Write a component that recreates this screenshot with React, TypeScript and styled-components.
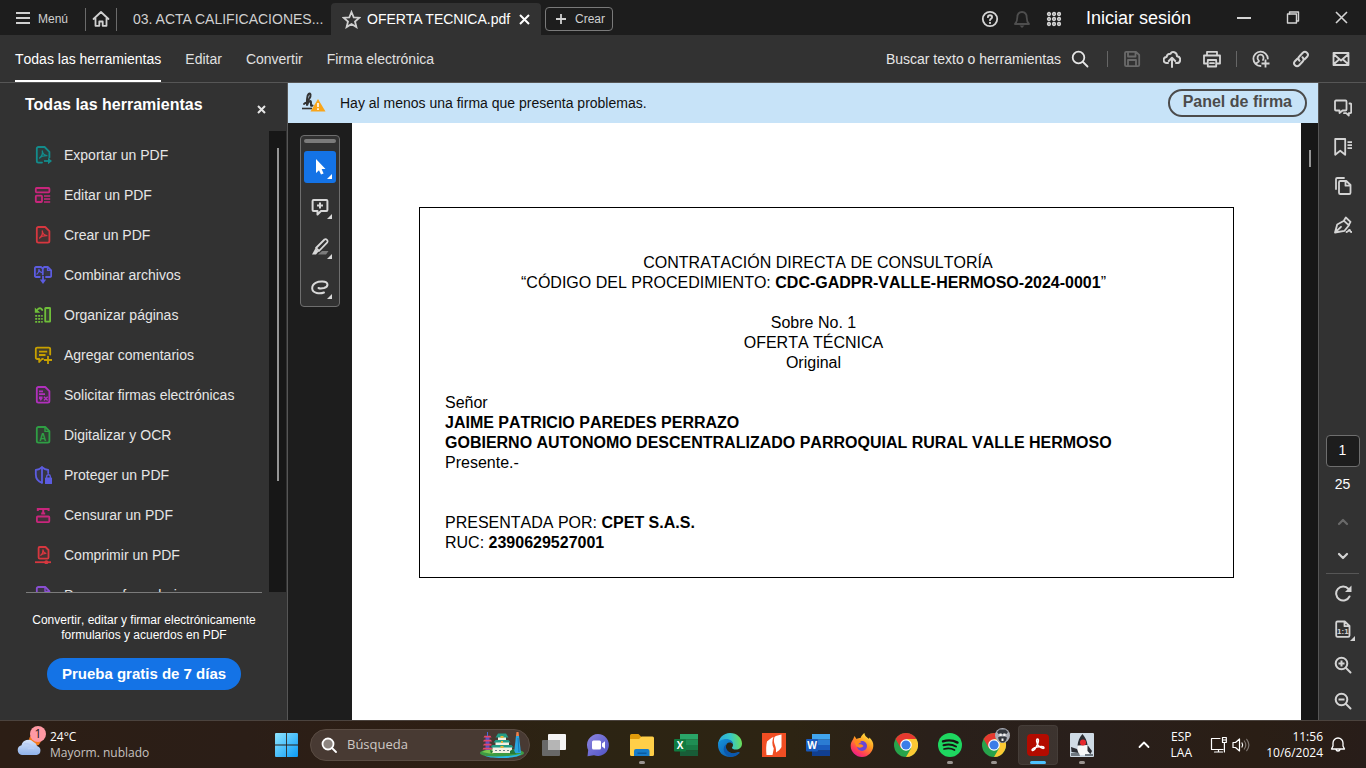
import React from 'react';
import styled, { createGlobalStyle, css } from 'styled-components';

const GlobalStyle = createGlobalStyle`
  *, *::before, *::after { box-sizing: border-box; }
  body { margin: 0; background: #1d1d1d; }
  button, input { font: inherit; color: inherit; }
  button { border: 0; padding: 0; background: none; cursor: pointer; font-kerning: inherit; }
  h2, p, ul { margin: 0; padding: 0; }
  ul { list-style: none; }
  svg { display: block; flex: none; }
`;

/* ---------- shell ---------- */

const Shell = styled.div`
  display: flex;
  flex-direction: column;
  height: 100vh;
  overflow: hidden;
  background: #1d1d1d;
  color: #e6e6e6;
  font-family: 'Liberation Sans', Arial, sans-serif;
  font-size: 14px;
  line-height: 18px;
  font-kerning: none;
`;

const TitleBar = styled.header`
  display: flex;
  align-items: center;
  flex: none;
  height: 35px;
  padding-left: 16px;
  background: #1d1d1d;
  color: #d0d0d0;
  font-kerning: normal;
`;

const MenuButton = styled.button`
  display: flex;
  align-items: center;
  gap: 7px;
  width: 69px;
  font-size: 12px;
  height: 24px;
  padding-top: 2px;
`;

const TitleSeparator = styled.span`
  width: 1px;
  height: 23px;
  margin-top: 4px;
  background: #6b6b6b;
`;

const HomeButton = styled.button`
  display: grid;
  place-items: center;
  width: 30px;
  height: 24px;
  margin-top: 3px;
`;

const Tab = styled.button<{ $active?: boolean }>`
  display: flex;
  align-items: center;
  align-self: flex-end;
  height: 32px;
  white-space: nowrap;
  ${(p) =>
    p.$active
      ? css`
          gap: 6px;
          width: 210px;
          padding: 0 11px;
          background: #323232;
          color: #fff;
          border-radius: 4px 4px 0 0;
        `
      : css`
          width: 214px;
          padding-left: 16px;
        `}
`;

const TabClose = styled.span`
  margin-left: auto;
`;

const CreateButton = styled.button`
  display: flex;
  align-items: center;
  gap: 8px;
  height: 24px;
  margin: 3px 0 0 4px;
  padding: 0 7px 0 9px;
  border: 1px solid #7a7a7a;
  border-radius: 4px;
  font-size: 12px;
`;

const AccountArea = styled.div`
  display: flex;
  align-items: center;
  gap: 14px;
  margin-left: auto;
  padding-top: 3px;
`;

const IconButton = styled.button<{ $w: number; $h: number; $dim?: boolean }>`
  position: relative;
  display: grid;
  place-items: center;
  width: ${(p) => p.$w}px;
  height: ${(p) => p.$h}px;
  flex: none;
  color: ${(p) => (p.$dim ? '#6a6a6a' : '#d4d4d4')};
`;

const SignIn = styled.button`
  margin-left: 9px;
  color: #fff;
  font-size: 18px;
  line-height: 20px;
  white-space: nowrap;
  padding-bottom: 2px;
`;

const WindowControls = styled.div`
  display: flex;
  margin-left: 28px;
`;

const ToolBar = styled.nav`
  display: flex;
  align-items: center;
  flex: none;
  height: 48px;
  padding: 0 5px 0 15px;
  background: #323232;
  border-bottom: 1px solid #565656;
`;

const MenuItems = styled.div`
  display: flex;
  gap: 24px;
  height: 47px;
`;

const MenuItem = styled.button<{ $active?: boolean }>`
  height: 47px;
  padding-top: 2px;
  border-bottom: 2px solid ${(p) => (p.$active ? '#fff' : 'transparent')};
  color: ${(p) => (p.$active ? '#fff' : '#e0e0e0')};
  white-space: nowrap;
`;

const ToolBarActions = styled.div`
  display: flex;
  align-items: center;
  margin-left: auto;
`;

const FindButton = styled.button`
  display: flex;
  align-items: center;
  gap: 10px;
  margin-right: 14px;
  white-space: nowrap;
`;

const ToolSeparator = styled.span`
  width: 1px;
  height: 16px;
  margin: 0 4px;
  background: #666;
`;

/* ---------- left panel ---------- */

const Workspace = styled.div`
  display: flex;
  flex: 1;
  min-height: 0;
`;

const SidePanel = styled.aside`
  display: flex;
  flex-direction: column;
  flex: none;
  width: 288px;
  background: #323232;
  border-right: 1px solid #565656;
`;

const PanelHeader = styled.div`
  display: flex;
  justify-content: space-between;
  align-items: center;
  flex: none;
  height: 48px;
  padding: 0 16px 4px 25px;
`;

const PanelTitle = styled.h2`
  color: #fff;
  font-size: 16px;
  line-height: 20px;
  font-kerning: normal;
`;

const PanelClose = styled.button`
  display: grid;
  place-items: center;
  width: 20px;
  height: 20px;
  margin-top: 8px;
`;

const ListViewport = styled.div`
  display: flex;
  flex: 1;
  min-height: 0;
  overflow: hidden;
  padding-right: 1px;
`;

const ToolList = styled.ul`
  flex: 1;
  padding-top: 4px;
`;

const ToolButton = styled.button`
  display: flex;
  align-items: center;
  gap: 12px;
  width: 100%;
  height: 40px;
  padding-left: 34px;
  text-align: left;
  white-space: nowrap;
`;

const ScrollTrack = styled.div<{ $pad: number }>`
  display: flex;
  justify-content: center;
  flex: none;
  width: 17px;
  padding-top: ${(p) => p.$pad}px;
  background: #171717;
`;

const ScrollThumb = styled.div<{ $h: string }>`
  width: 2px;
  height: ${(p) => p.$h};
  margin-left: 1px;
  background: #959595;
`;

const PanelFooter = styled.div`
  display: flex;
  flex-direction: column;
  align-items: center;
  flex: none;
  height: 128px;
  margin: 0 25px 0 26px;
  border-top: 1px solid #7b7b7b;
  padding-top: 20px;
  color: #fff;
  font-size: 12px;
  line-height: 15px;
  text-align: center;
`;

const FooterText = styled.p`
  white-space: pre-line;
`;

const TrialButton = styled.button`
  flex: none;
  height: 32px;
  margin-top: 15px;
  padding: 0 15px 2px;
  border-radius: 16px;
  background: #1473e6;
  color: #fff;
  font-size: 15px;
  font-weight: 700;
  font-kerning: normal;
  white-space: nowrap;
`;

/* ---------- document ---------- */

const Viewer = styled.main`
  display: flex;
  flex-direction: column;
  flex: 1;
  min-width: 0;
`;

const SignatureBar = styled.div`
  display: flex;
  align-items: center;
  flex: none;
  height: 40px;
  padding: 0 11px 0 14px;
  background: #c7e3f8;
  color: #111;
`;

const SignatureText = styled.p`
  flex: 1;
  margin-left: 14px;
`;

const SignatureButton = styled.button`
  height: 28px;
  padding: 0 13px 2px;
  border: 2px solid #4b4b4b;
  border-radius: 14px;
  color: #4b4b4b;
  font-size: 16px;
  font-weight: 700;
  white-space: nowrap;
`;

const Canvas = styled.div`
  display: flex;
  flex: 1;
  min-height: 0;
`;

const Gutter = styled.div`
  flex: none;
  width: 64px;
  padding: 12px;
`;

const Palette = styled.div`
  display: flex;
  flex-direction: column;
  align-items: center;
  gap: 8px;
  width: 40px;
  height: 172px;
  padding-top: 3px;
  border: 1px solid #6e6e6e;
  border-radius: 4px;
  background: #323232;
`;

const PaletteGrip = styled.span`
  width: 32px;
  height: 4px;
  border-radius: 2px;
  background: #7b7b7b;
`;

const PaletteButton = styled.button<{ $active?: boolean }>`
  display: grid;
  place-items: center;
  flex: none;
  width: 32px;
  height: 32px;
  border-radius: 3px;
  background: ${(p) => (p.$active ? '#1473e6' : 'transparent')};
  color: ${(p) => (p.$active ? '#fff' : '#d8d8d8')};
`;

const Page = styled.article`
  flex: 1;
  min-width: 0;
  padding: 84px 67px 0;
  background: #fff;
  color: #000;
  font-size: 16px;
  line-height: 20px;
`;

const Frame = styled.div`
  padding: 45px 51px 24px 25px;
  border: 1px solid #000;
`;

const Block = styled.div<{ $center?: boolean }>`
  text-align: ${(p) => (p.$center ? 'center' : 'left')};
  & + & { margin-top: 20px; }
`;

const LastBlock = styled.div`
  margin-top: 40px;
`;

/* ---------- right rail ---------- */

const Rail = styled.aside`
  display: flex;
  flex-direction: column;
  align-items: center;
  flex: none;
  width: 48px;
  padding: 5px 0 1px;
  background: #323232;
  border-left: 1px solid #565656;
`;

const RailTools = styled.div`
  flex: 1;
`;

const PageInput = styled.input`
  width: 34px;
  height: 32px;
  padding: 0 0 2px;
  border: 1px solid #6e6e6e;
  border-radius: 4px;
  background: #1d1d1d;
  color: #fff;
  text-align: center;
`;

const PageTotal = styled.output`
  height: 34px;
  margin-bottom: 4px;
  line-height: 34px;
  color: #fff;
`;

const RailDivider = styled.span`
  width: 33px;
  height: 1px;
  margin-bottom: 1px;
  background: #565656;
`;

/* ---------- taskbar ---------- */

const TaskBar = styled.footer`
  display: grid;
  grid-template-columns: 1fr auto 1fr;
  flex: none;
  height: 48px;
  padding-left: 2px;
  border-top: 1px solid #4b433e;
  background: linear-gradient(90deg, #2c1e15 0%, #2b1e17 18%, #2e1f14 32%, #2c2413 42%, #2d2413 58%, #2a201a 68%, #291f1b 80%, #2a1e15 92%, #281d19 100%);
  color: #fff;
  font-family: 'Open Sans', 'Noto Sans', sans-serif;
  font-size: 12px;
  line-height: 16px;
`;

const Weather = styled.button`
  display: flex;
  align-items: center;
  gap: 6px;
  padding-left: 14px;
  text-align: left;
`;

const WeatherArt = styled.span`
  position: relative;
  width: 28px;
  height: 38px;
`;

const Badge = styled.span`
  position: absolute;
  top: 0;
  left: 14px;
  width: 16px;
  height: 16px;
  border-radius: 8px;
  background: #ff99a4;
  color: #1a1a1a;
  text-align: center;
`;

const Muted = styled.span`
  color: #c8c3c0;
  white-space: nowrap;
`;

const Dock = styled.div`
  display: flex;
  align-items: center;
`;

const DockButton = styled.button<{ $active?: boolean }>`
  position: relative;
  display: grid;
  place-items: center;
  width: 40px;
  height: 40px;
  margin: 0 2px;
  border-radius: 4px;
  background: ${(p) => (p.$active ? 'rgba(255,255,255,0.09)' : 'transparent')};
  box-shadow: ${(p) => (p.$active ? 'inset 0 0 0 1px rgba(255,255,255,0.05)' : 'none')};
`;

const RunMark = styled.span<{ $active?: boolean }>`
  position: absolute;
  bottom: 1px;
  left: 50%;
  transform: translateX(-50%);
  width: ${(p) => (p.$active ? 16 : 6)}px;
  height: 3px;
  border-radius: 2px;
  background: ${(p) => (p.$active ? '#4cc2ff' : '#9a9490')};
`;

const SearchBox = styled.label`
  display: flex;
  align-items: center;
  gap: 10px;
  width: 220px;
  height: 32px;
  margin: 0 2px;
  padding: 0 5px 0 10px;
  border: 1px solid #5a4c43;
  border-radius: 16px;
  background: #483a33;
`;

const SearchInput = styled.input`
  flex: 1;
  min-width: 0;
  border: 0;
  padding: 0 0 1px;
  outline: 0;
  background: none;
  font-size: 13px;
  &::placeholder { color: #cfc9c5; opacity: 1; }
`;

const Tray = styled.div`
  display: flex;
  align-items: center;
  justify-content: flex-end;
  padding-right: 20px;
`;

const TrayButton = styled.button`
  display: flex;
  align-items: center;
  height: 40px;
`;

const Language = styled(TrayButton)`
  flex-direction: column;
  justify-content: center;
  margin: 0 18px 0 21px;
`;

const Clock = styled(TrayButton)`
  gap: 7px;
  margin-left: 15px;
  text-align: right;
`;

/* ---------- icons ---------- */

type IconProps = { children: React.ReactNode; size?: number; color?: string; w?: number };

const Icon = ({ children, size = 18, color, w = 1.8 }: IconProps) => (
  <svg
    width={size}
    height={size}
    viewBox={`0 0 ${size} ${size}`}
    fill="none"
    stroke="currentColor"
    strokeWidth={w}
    strokeLinecap="round"
    strokeLinejoin="round"
    color={color}
    aria-hidden="true"
  >
    {children}
  </svg>
);

const tint = { fill: 'currentColor', fillOpacity: 0.12 };
const solid = { fill: 'currentColor', stroke: 'none' };
const sheet = 'M4.4 1h6.8l4.2 4.2v9.8a1.6 1.6 0 0 1-1.6 1.6H4.4A1.6 1.6 0 0 1 2.8 15V2.600A1.600 1.600 0 0 1 4.400 1z';
const Squiggle = () => (
  <path strokeWidth="1.3" d="M8.300 5c.5 2.600-.8 5.600-2.700 7M8.300 5c.3 2.400 1.800 4.200 4.600 4.600M5.600 12c1.400-1.600 4.200-2.400 7.300-2.400" />
);

const ExportIcon = () => (
  <Icon color="#138c8c">
    <path {...tint} d="M8 16.600H4.400A1.600 1.600 0 0 1 2.800 15V2.600A1.600 1.600 0 0 1 4.400 1h6.200l4.800 4.800v5.700" />
    <Squiggle />
    <path strokeLinecap="butt" d="M10 15h5.500" />
    <path {...solid} d="M14 11.800 18 15l-4 3.200z" />
  </Icon>
);
const EditIcon = () => (
  <Icon color="#c8267c">
    <rect {...tint} x="1.800" y="2" width="13.600" height="4.400" rx=".8" />
    <rect {...tint} x="1.800" y="9.600" width="6.200" height="6.400" rx=".8" />
    <path strokeLinecap="butt" strokeWidth="1.700" d="M10 10h6.200M10 13h6.200M10 16h6.200" />
  </Icon>
);
const CreateIcon = () => (
  <Icon color="#d7373f">
    <path {...tint} d={sheet} />
    <Squiggle />
  </Icon>
);
const CombineIcon = () => (
  <Icon color="#5c5ce0">
    <path {...tint} d="M5.800 11H2A1.100 1.100 0 0 1 .9 9.900V2.100A1.100 1.100 0 0 1 2 1h5l1.800 1.600V8.500M12 11h4a1.200 1.200 0 0 0 1.200-1.200V4.400L13.800 1H10L8.800 2.600" />
    <path strokeWidth="1.300" d="M5 3.500c.2 2-.6 3.500-2 4.500M5 3.500c.2 1.500 1 2.600 2.400 2.900M13.500 1v3.400h3.500" />
    <path strokeLinecap="butt" d="M9 10v5" />
    <path {...solid} d="M5.800 13.500h6.400L9 18z" />
  </Icon>
);
const OrganizeIcon = () => (
  <Icon color="#6fbf3a">
    <rect {...tint} x="11.200" y="2" width="4.900" height="13.600" rx=".4" />
    <path strokeLinecap="butt" strokeDasharray="2 1" d="M1.200 9.800h7.500M1.200 12.800h7.500M1.200 15.800h7.500" />
    <path d="M8.300 4C7.200 1.800 5 1.700 3.500 3.500" />
    <path {...solid} d="M.8 1.500v5.300h5.500z" />
  </Icon>
);
const CommentAddIcon = () => (
  <Icon color="#c7a000">
    <path {...tint} d="M9 13H8l-2.800 3V13H3.200a1.400 1.400 0 0 1-1.400-1.400V3a1.400 1.400 0 0 1 1.400-1.400h11.600A1.400 1.400 0 0 1 16.200 3v5.600" />
    <path strokeLinecap="butt" d="M5 5.600h8.200M5 9h6.500M14 10v8M10 14h8" />
  </Icon>
);
const SignRequestIcon = () => (
  <Icon color="#b130bd">
    <path {...tint} d={sheet} />
    <path strokeLinecap="butt" d="M5 5.300h4M5 8.200h6" />
    <path {...solid} d="M5 10.500h3.500v2l-1.700 2.500L5 12.500z" />
    <path strokeWidth="1.600" d="m10.400 11.200 2.800 2.800M13.200 11.200 10.400 14" />
  </Icon>
);
const ScanIcon = () => (
  <Icon color="#2f9e44">
    <path {...tint} d={sheet} />
    <path strokeWidth="1.400" d="M11 1.200v4.200h4.200" />
    <text {...solid} x="8.900" y="14.500" fontSize="10" fontWeight="700" textAnchor="middle">A</text>
  </Icon>
);
const ProtectIcon = () => (
  <Icon color="#5c5ce0">
    <path {...tint} d="M8 16.800C4 15.500 1.800 12.500 1.800 8.500V4C4.500 3.700 6.500 2.700 8 1.200c1.800 1.500 3.800 2.500 6.200 2.800v3" />
    <path d="M8 1.200v15.400" />
    <rect {...solid} x="11" y="11.500" width="7" height="6.500" rx=".6" />
    <path strokeWidth="1.400" d="M12.700 11.500v-1a1.800 1.800 0 0 1 3.600 0v1" />
  </Icon>
);
const RedactIcon = () => (
  <Icon color="#c8267c">
    <path strokeLinecap="butt" strokeLinejoin="miter" strokeWidth="2" d="M3.800 5V3h10.800v2M9.200 3v5M7.200 7.600h4" />
    <rect {...tint} x="2.900" y="10.500" width="12.400" height="5.600" rx=".8" />
  </Icon>
);
const CompressIcon = () => (
  <Icon color="#d7373f">
    <path {...tint} d="M5.600 1h5.900l3 3v7.600a1 1 0 0 1-1 1H5.600a1 1 0 0 1-1-1V2a1 1 0 0 1 1-1z" />
    <path strokeWidth="1.300" d="M9 4c.2 2-.8 4-2.200 5.200M9 4c.2 1.800 1.200 3 2.800 3.300M6.800 9.200c1-1.200 3-1.800 5-1.900" />
    <path strokeLinecap="butt" d="M1 16.200h16" />
    <circle {...solid} cx="12.300" cy="16.200" r="2" />
  </Icon>
);
const FormIcon = () => (
  <Icon color="#8a4fd3">
    <path {...tint} d={sheet} />
    <path strokeWidth="1.400" d="M11 1.200v4.200h4.200" />
  </Icon>
);

const tools = [
  { label: 'Exportar un PDF', icon: <ExportIcon /> },
  { label: 'Editar un PDF', icon: <EditIcon /> },
  { label: 'Crear un PDF', icon: <CreateIcon /> },
  { label: 'Combinar archivos', icon: <CombineIcon /> },
  { label: 'Organizar páginas', icon: <OrganizeIcon /> },
  { label: 'Agregar comentarios', icon: <CommentAddIcon /> },
  { label: 'Solicitar firmas electrónicas', icon: <SignRequestIcon /> },
  { label: 'Digitalizar y OCR', icon: <ScanIcon /> },
  { label: 'Proteger un PDF', icon: <ProtectIcon /> },
  { label: 'Censurar un PDF', icon: <RedactIcon /> },
  { label: 'Comprimir un PDF', icon: <CompressIcon /> },
  { label: 'Preparar formularios', icon: <FormIcon /> },
];

const Cross = ({ size, w }: { size: number; w: number }) => (
  <Icon size={size} w={w}>
    <path strokeLinecap="butt" d={`M1 1 ${size - 1} ${size - 1}M${size - 1} 1 1 ${size - 1}`} />
  </Icon>
);
const Corner = () => <path {...solid} d="M28 23v5h-5z" />;

/* ---------- taskbar artwork ---------- */

const WindowsArt = () => (
  <svg width="23" height="24" viewBox="0 0 22 23" aria-hidden="true">
    <defs>
      <linearGradient id="win" x1="0" y1="0" x2="1" y2="1">
        <stop offset="0" stopColor="#8fe5ff" />
        <stop offset="1" stopColor="#0a9bf7" />
      </linearGradient>
    </defs>
    <path fill="url(#win)" d="M1 0h9.600v11H0V1a1 1 0 0 1 1-1zM11.400 0H21a1 1 0 0 1 1 1v10H11.400zM0 12h10.600v11H1a1 1 0 0 1-1-1zM11.400 12H22v10a1 1 0 0 1-1 1h-9.600z" />
  </svg>
);

const CloudArt = () => (
  <svg width="26" height="38" viewBox="0 0 26 38" aria-hidden="true">
    <defs>
      <linearGradient id="cloud" x1="0" y1="0" x2="0" y2="1">
        <stop offset="0" stopColor="#d6e4fb" />
        <stop offset="1" stopColor="#8fb2ea" />
      </linearGradient>
    </defs>
    <circle cx="19" cy="14" r="6" fill="#f47b20" />
    <path fill="url(#cloud)" d="M6 29a5 5 0 0 1-.5-9.800A7 7 0 0 1 17.500 16a6 6 0 0 1 3.500 4 4.600 4.600 0 0 1-.5 9z" />
    <path fill="none" stroke="#b9cdf4" strokeWidth="1.500" d="M8 18c4-1 6 0 7.500 3M12 23c2-1.500 5-1.500 6 0" />
  </svg>
);

const CityArt = () => (
  <svg width="44" height="26" viewBox="0 0 44 26" aria-hidden="true">
    <ellipse cx="22" cy="21" rx="22" ry="4.500" fill="#3e9a43" />
    <path fill="#27b7e8" d="M4 23.500c9 2 27 1 38-2-3 3-9 4.500-20 4.500-9 0-15-.8-18-2.500z" />
    <path fill="#7cc850" d="M2 20c6-3 12-3 16-1l-6 3z" />
    <path fill="#5e4fc0" d="M5.500 4h4v14h-4z" />
    <path fill="#e2476b" d="M3.500 5.500h8l-1-1.700h-6zM3 9.500h9l-1-1.700H4zM3 13.500h9l-1-1.700H4zM2.500 17.500h10l-1-1.700h-8z" />
    <path stroke="#4c68d8" d="M7.500 0v4" />
    <path fill="#f5f1e2" d="M18 5h8v5h3v5h3v6H12.500v-6h3v-5H18z" />
    <path fill="#239c86" d="M18 1.500h8l2.500 4h-13zM15.500 8h13l2 2.500H13.500zM12.500 13h19l2 2.500h-23z" />
    <path fill="#e3b63d" d="M20.500 4h3v2h-3zM21 9h2v2h-2zM20.500 14h3v2h-3z" />
    <path stroke="#6d7e85" d="M15 18.500h2M19 18.500h2M23 18.500h2M27 18.500h2" />
    <path fill="#2aa5e0" d="M36 4h3l2 17h-7z" />
    <path fill="#f0804a" d="M36.500 0h2l.5 4h-3z" />
    <path stroke="#1478bb" d="M38 6l1 14" />
    <path fill="#27783a" d="M30 19l3-2 3 5h-6zM10 18l3 1-2 3z" />
  </svg>
);

const TaskViewArt = () => (
  <svg width="24" height="22" viewBox="0 0 24 22" aria-hidden="true">
    <rect x="6" width="18" height="16" rx="1" fill="#f4f4f4" />
    <rect y="6" width="18" height="16" rx="1" fill="#686868" />
    <path fill="#b5b5b5" d="M6 6h12v10H6z" />
  </svg>
);

const ChatArt = () => (
  <svg width="24" height="24" viewBox="0 0 24 24" aria-hidden="true">
    <defs>
      <linearGradient id="chat" x1="0" y1="0" x2="1" y2="1">
        <stop offset="0" stopColor="#8d86e0" />
        <stop offset="1" stopColor="#4f52c4" />
      </linearGradient>
    </defs>
    <path fill="url(#chat)" d="M12 1a11 11 0 1 1-4 21.300L1.500 23.300 2.200 17A11 11 0 0 1 12 1z" />
    <rect x="6" y="7.500" width="9" height="9" rx="1.500" fill="#fff" />
    <path fill="#fff" d="m16 10.500 3-2.300v7.600l-3-2.300z" />
  </svg>
);

const FolderArt = () => (
  <svg width="24" height="22" viewBox="0 0 24 22" aria-hidden="true">
    <path fill="#e09b0b" d="M0 1.500A1.500 1.500 0 0 1 1.500 0h7l2.500 2.500V8H0z" />
    <path fill="#ffcf48" d="M0 5h9l2.500-2.500h11A1.500 1.500 0 0 1 24 4v16.500a1.500 1.500 0 0 1-1.500 1.500h-21A1.500 1.500 0 0 1 0 20.500z" />
    <path fill="#157bc9" d="M4 22v-5a2 2 0 0 1 2-2h11.500a2 2 0 0 1 2 2v5z" />
    <path fill="#0b5a9e" d="M7.500 18.500h9V20h-9z" />
  </svg>
);

const OfficeArt = ({ letter, bands, tile }: { letter: string; bands: string[]; tile: string }) => (
  <svg width="24" height="22" viewBox="0 0 24 22" aria-hidden="true">
    {bands.map((c, i) => (
      <rect key={c} x="6" y={i * 5.5} width="18" height="5.600" fill={c} />
    ))}
    <rect y="5" width="12" height="12.500" rx="1" fill={tile} />
    <text x="6" y="15" fill="#fff" fontSize="10" fontWeight="700" textAnchor="middle">
      {letter}
    </text>
  </svg>
);

const EdgeArt = () => (
  <svg width="24" height="24" viewBox="0 0 24 24" aria-hidden="true">
    <defs>
      <linearGradient id="edgeTop" x1="0" y1=".5" x2="1" y2=".4">
        <stop offset="0" stopColor="#2aa7dd" />
        <stop offset=".55" stopColor="#36c6c9" />
        <stop offset="1" stopColor="#6fe04f" />
      </linearGradient>
      <linearGradient id="edgeLow" x1="0" y1="0" x2="1" y2="1">
        <stop offset="0" stopColor="#1593dd" />
        <stop offset="1" stopColor="#0c4fa0" />
      </linearGradient>
    </defs>
    <path fill="url(#edgeTop)" d="M0 11.500C.5 5 5.500 0 12 0c7 0 12 5 12 10.500 0 4-3 6-6 6-2.500 0-4-.8-4-1.800 0-.7 1-1.200 1-3C15 9 12.500 7.500 9.500 7.500 5 7.500 1.500 9.500 0 11.500z" />
    <path fill="url(#edgeLow)" d="M0 12c0-4 4-6 8-6 4.500 0 7 2.500 7 5.200-1-1.600-2.600-2-4-1.700-3 .8-4 4-2.500 7 2 4 7.500 4.500 11.500 2.600 1-.5 2 .4 1.500 1.200A12 12 0 0 1 12 24C5 24 0 19 0 12z" />
    <path fill="#0b58ad" d="M9.500 10.300c-4 2-5.200 7.200-1.800 10.700 2 2 4 3 6.300 2.800 3.500-.5 6-2.500 7.500-4.500-5 2.200-10.500 1.200-12.800-2.500-1.400-2.400-.9-5 .8-6.500z" />
  </svg>
);

const NitroArt = () => (
  <svg width="24" height="24" viewBox="0 0 24 24" aria-hidden="true">
    <rect width="24" height="24" fill="#f04e23" />
    <path fill="#fff" d="M5 8.500C7 7 9 4.500 11.500 4 10 7.500 9.800 12 11.800 15.500L10.500 22H4.500C4 17 4 12 5 8.500zM12.500 4C14 2.500 17 2 19.500 1.500V14c-1.500 2.500-3 4-5.500 5.500.3-4-.5-6-1.500-8.500-.8-2.500-.8-4.500 0-7z" />
  </svg>
);

const FirefoxArt = () => (
  <svg width="24" height="24" viewBox="0 0 24 24" aria-hidden="true">
    <defs>
      <linearGradient id="fox" x1=".8" y1="0" x2=".2" y2="1">
        <stop offset="0" stopColor="#fff04a" />
        <stop offset=".4" stopColor="#ff9a1f" />
        <stop offset=".75" stopColor="#ff4055" />
        <stop offset="1" stopColor="#e3129c" />
      </linearGradient>
    </defs>
    <path fill="url(#fox)" d="M3 6.500 4.500 3l2 3C8 5.300 9.500 5 10.500 5 11.500 2.500 13 1 14.500 0c0 3 2.500 4 4.500 6l.5-1.500C22.500 7.500 23.500 10 23.300 13 23 19 18 24 12 24S.7 19 .7 13c0-2.500.8-4.800 2.300-6.500z" />
    <circle cx="12" cy="13" r="5" fill="#6b45d8" />
    <path fill="#ff8a1c" d="M4 8c3-1.500 6-1 7.500 1.200-1.800.5-3 1.300-3 2.300 2-.5 4 0 5 1.500-2 2.500-6 2-7.500-.5C5 10.500 4.500 9 4 8z" />
  </svg>
);

const ChromeShape = () => (
  <>
    <circle cx="12" cy="12" r="12" fill="#27a34b" />
    <path fill="#fcc934" d="M12 6h10.400A12 12 0 0 1 12 24l5.200-9z" />
    <path fill="#e5392f" d="M1.600 6a12 12 0 0 1 20.800 0H12l-5.200 9z" />
    <circle cx="12" cy="12" r="5.800" fill="#fff" />
    <circle cx="12" cy="12" r="4.600" fill="#3b7de8" />
  </>
);
const ChromeArt = () => (
  <svg width="24" height="24" viewBox="0 0 24 24" aria-hidden="true">
    <ChromeShape />
  </svg>
);
const ChromeProfileArt = () => (
  <svg width="32" height="34" viewBox="-4 -5 32 34" aria-hidden="true">
    <ChromeShape />
    <circle cx="20.500" cy="2.500" r="7.500" fill="#a9adb6" />
    <path fill="#32363d" d="m15-1 2.500-2.500h6L26-1l-1.500 2h-8zM16 4.500l2-1h5l2 1-1 3-2 2h-3l-2-2z" />
    <path fill="#f3f3f3" d="M17.500.5h2.200V3h-2.200zM21.300.5h2.200V3h-2.200zM19.500 5.500h2v2.500h-2z" />
  </svg>
);

const SpotifyArt = () => (
  <svg width="24" height="24" viewBox="0 0 24 24" fill="none" stroke="#191414" strokeLinecap="round" aria-hidden="true">
    <circle cx="12" cy="12" r="12" fill="#1ed760" stroke="none" />
    <path strokeWidth="2.400" d="M5 8.300c5-1.500 10.500-1 14.500 1.300" />
    <path strokeWidth="2" d="M5.500 12.300c4.500-1.300 9-.8 12.500 1.200" />
    <path strokeWidth="1.700" d="M6 16c3.800-1 7.500-.7 10.500 1" />
  </svg>
);

const AcrobatArt = () => (
  <svg width="22" height="22" viewBox="0 0 22 22" fill="none" aria-hidden="true">
    <rect width="22" height="22" rx="4" fill="#b30b00" />
    <path stroke="#fff" strokeWidth="1.500" strokeLinejoin="round" d="M10.500 5c1.500 0 1 3-.3 5.800C8.800 14 6.800 17 5.500 16.500c-1.500-.8 1-2.600 4.500-3.400 3.500-.8 7-.8 7 .6 0 1.600-3.500.2-5.500-2C9.500 9.500 9 5 10.500 5z" />
  </svg>
);

const DukeArt = () => (
  <svg width="24" height="24" viewBox="0 0 24 24" aria-hidden="true">
    <rect width="24" height="24" rx="1" fill="#cfdbe5" />
    <path fill="#f7f7f7" d="M8 12h10l1 10H7z" />
    <path fill="#2b2d33" d="M12.500 1c3 3.500 4.500 7 5 11l-10 .5c.5-4.500 2-8.500 5-11.500zM1 14l6 2 1.500 4-7-1zM17.500 12l4.500 6-1.500 3-3-3z" />
    <path fill="#6f7880" d="M1 20h8l1 3H1zM15 21h8v2h-8z" />
    <circle cx="13" cy="9.500" r="3" fill="#e6282d" />
  </svg>
);

const dock = [
  { name: 'Vista de tareas', art: <TaskViewArt /> },
  { name: 'Chat', art: <ChatArt /> },
  { name: 'Explorador de archivos', art: <FolderArt />, running: true },
  { name: 'Excel', art: <OfficeArt letter="X" bands={['#2aa568', '#1f8e54', '#187a45', '#185c37']} tile="#107c41" /> },
  { name: 'Edge', art: <EdgeArt /> },
  { name: 'Nitro', art: <NitroArt /> },
  { name: 'Word', art: <OfficeArt letter="W" bands={['#41a5ee', '#2b7cd3', '#1a5cbe', '#103f91']} tile="#185abd" /> },
  { name: 'Firefox', art: <FirefoxArt /> },
  { name: 'Chrome', art: <ChromeArt /> },
  { name: 'Spotify', art: <SpotifyArt />, running: true },
  { name: 'Chrome, perfil', art: <ChromeProfileArt />, running: true },
  { name: 'Acrobat', art: <AcrobatArt />, running: true, active: true },
  { name: 'Java', art: <DukeArt />, running: true },
];

/* ---------- application ---------- */

export default function App() {
  return (
    <Shell>
      <GlobalStyle />
      <TitleBar>
        <MenuButton>
          <Icon size={15} w={2}><path strokeLinecap="butt" d="M0 2h14M0 7h14M0 12h14" /></Icon>
          Menú
        </MenuButton>
        <TitleSeparator />
        <HomeButton aria-label="Inicio">
          <Icon><path d="M1.500 9 9 2l7.500 7M3.500 8.500v7.300h3.800v-4.300h3.400v4.300h3.800V8.500" /></Icon>
        </HomeButton>
        <TitleSeparator />
        <Tab>03. ACTA CALIFICACIONES...</Tab>
        <Tab $active>
          <Icon size={19} color="#d0d0d0"><path strokeLinejoin="miter" d="m9.500 2 2.200 5.300 5.600.4-4.300 3.800 1.400 5.600-4.900-3.100-4.900 3.100L6 11.500 1.700 7.700l5.600-.4z" /></Icon>
          OFERTA TECNICA.pdf
          <TabClose><Cross size={11} w={2} /></TabClose>
        </Tab>
        <CreateButton>
          <Icon size={12}><path strokeLinecap="butt" d="M6 1v10M1 6h10" /></Icon>
          Crear
        </CreateButton>
        <AccountArea>
          <IconButton $w={18} $h={18} aria-label="Ayuda">
            <Icon>
              <circle cx="9" cy="9" r="7.200" />
              <path d="M6.900 7.200c0-2.600 4.200-2.600 4.200 0 0 1.500-2.100 1.600-2.100 3" />
              <circle {...solid} cx="9" cy="12.900" r="1.100" />
            </Icon>
          </IconButton>
          <IconButton $w={18} $h={18} $dim aria-label="Notificaciones">
            <Icon color="#4e4e4e">
              <path d="M2 14h14c-2-2-2.300-3.500-2.300-6.500C13.700 4 12 2 9 2S4.300 4 4.300 7.500C4.300 10.500 4 12 2 14z" />
              <path {...solid} d="M6.500 15.500h5L9 18z" />
            </Icon>
          </IconButton>
          <IconButton $w={18} $h={18} aria-label="Aplicaciones">
            <Icon w={1.300}>
              {[4, 9, 14].map((y) => [4, 9, 14].map((x) => <circle key={`${x}-${y}`} cx={x} cy={y} r="1.500" fill="#999" />))}
            </Icon>
          </IconButton>
          <SignIn>Iniciar sesión</SignIn>
        </AccountArea>
        <WindowControls>
          <IconButton $w={49} $h={30} aria-label="Minimizar">
            <Icon size={14} w={2}><path strokeLinecap="butt" d="M0 7h14" /></Icon>
          </IconButton>
          <IconButton $w={49} $h={30} aria-label="Restaurar">
            <Icon size={14} w={1.400}>
              <rect x="1.500" y="3" width="9" height="9" />
              <path d="M3.500 3V1h9v9h-2" />
            </Icon>
          </IconButton>
          <IconButton $w={49} $h={30} aria-label="Cerrar"><Cross size={13} w={1.600} /></IconButton>
        </WindowControls>
      </TitleBar>

      <ToolBar>
        <MenuItems>
          <MenuItem $active>Todas las herramientas</MenuItem>
          <MenuItem>Editar</MenuItem>
          <MenuItem>Convertir</MenuItem>
          <MenuItem>Firma electrónica</MenuItem>
        </MenuItems>
        <ToolBarActions>
          <FindButton>
            Buscar texto o herramientas
            <Icon><circle cx="7.500" cy="7.500" r="5.800" /><path d="m12 12 4.500 4.500" /></Icon>
          </FindButton>
          <ToolSeparator />
          <IconButton $w={40} $h={32} $dim aria-label="Guardar">
            <Icon><path d="M2 3a1.200 1.200 0 0 1 1.200-1.200H13L16.200 5v10a1.200 1.200 0 0 1-1.200 1.200H3.200A1.200 1.200 0 0 1 2 15zM5 2v4.500h7.500V2M5 16v-6h8v6" /></Icon>
          </IconButton>
          <IconButton $w={40} $h={32} aria-label="Subir a la nube">
            <Icon w={2}><path d="M5 13H3.800A3 3 0 0 1 3.500 7 4 4 0 0 1 7.500 3.800C9 .8 14 2 14 6.200c4.500.3 4 6.800 0 6.800h-1M9 17V8.500M5.800 11 9 7.800l3.200 3.200" /></Icon>
          </IconButton>
          <IconButton $w={40} $h={32} aria-label="Imprimir">
            <Icon><path d="M4 5V1.800h10V5M4.500 13.500H1V5.500h16v8h-3.500M4.800 10h8.400v6.500H4.800zM7 13.200h4" /></Icon>
          </IconButton>
          <ToolSeparator />
          <IconButton $w={40} $h={32} aria-label="Agregar persona">
            <Icon>
              <path d="M8.500 16A7.200 7.200 0 1 1 15.800 8.500M4 14c.5-1.800 3-1.800 3-3-3-3.200-1-6.300 1.500-6.300S12.500 7.500 11 10" />
              <path strokeLinecap="butt" d="M13.500 9.500v8M9.500 13.500h8" />
            </Icon>
          </IconButton>
          <IconButton $w={40} $h={32} aria-label="Copiar vínculo">
            <Icon w={2}><path d="M7.500 10.800C6 9.200 6 7.800 7.300 6.500l3.500-3.700c2.800-2.600 6.800 1 4.300 4L12.700 9.300M10.500 7.200c1.500 1.600 1.500 3 .2 4.300l-3.500 3.700c-2.800 2.600-6.800-1-4.300-4l2.400-2.500" /></Icon>
          </IconButton>
          <IconButton $w={40} $h={32} aria-label="Correo">
            <Icon><path d="M1.500 3h15v12h-15zM1.500 4l7.500 6.500L16.500 4M1.500 14.500l5.500-5M16.500 14.500l-5.500-5" /></Icon>
          </IconButton>
        </ToolBarActions>
      </ToolBar>

      <Workspace>
        <SidePanel>
          <PanelHeader>
            <PanelTitle>Todas las herramientas</PanelTitle>
            <PanelClose aria-label="Cerrar panel"><Cross size={9} w={2} /></PanelClose>
          </PanelHeader>
          <ListViewport>
            <ToolList>
              {tools.map((t) => (
                <li key={t.label}>
                  <ToolButton>{t.icon}{t.label}</ToolButton>
                </li>
              ))}
            </ToolList>
            <ScrollTrack $pad={17}><ScrollThumb $h="75%" /></ScrollTrack>
          </ListViewport>
          <PanelFooter>
            <FooterText>{'Convertir, editar y firmar electrónicamente\nformularios y acuerdos en PDF'}</FooterText>
            <TrialButton>Prueba gratis de 7 días</TrialButton>
          </PanelFooter>
        </SidePanel>

        <Viewer>
          <SignatureBar>
            <svg width="24" height="22" viewBox="0 0 24 22" fill="none" aria-hidden="true">
              <path stroke="#333" strokeWidth="2" strokeLinecap="round" d="M2 12c4-3 7-6.500 6.500-9.500C8 0 5.500 2 5.200 6c-.3 3-.7 5-.2 7.500 1-4 4-6 4-3s-.5 4 1.500 3" />
              <path stroke="#333" strokeWidth="1.600" d="M0 16.500h10" />
              <path fill="#f9a51a" d="M16 7 23.500 19.500h-15z" />
              <path stroke="#fff" strokeWidth="1.600" d="M16 11v4M16 16.300v1.600" />
            </svg>
            <SignatureText>Hay al menos una firma que presenta problemas.</SignatureText>
            <SignatureButton>Panel de firma</SignatureButton>
          </SignatureBar>
          <Canvas>
            <Gutter>
              <Palette>
                <PaletteGrip />
                <PaletteButton $active aria-label="Seleccionar">
                  <Icon size={32}>
                    <path {...solid} d="M12 8v14l3-2.800 2 4.400 2.600-1.200-2-4.300h3.900z" />
                    <Corner />
                  </Icon>
                </PaletteButton>
                <PaletteButton aria-label="Agregar comentario">
                  <Icon size={32} w={2}>
                    <path d="M9.600 9h12.800a1 1 0 0 1 1 1v9a1 1 0 0 1-1 1H17L13.500 23.500V20H9.600a1 1 0 0 1-1-1v-9a1 1 0 0 1 1-1z" />
                    <path strokeLinecap="butt" d="M16 11.500v6M13 14.500h6" />
                    <Corner />
                  </Icon>
                </PaletteButton>
                <PaletteButton aria-label="Resaltar">
                  <Icon size={32}>
                    <path {...solid} fillOpacity=".45" d="M18 20h6.500L22 23.500h-8z" />
                    <path d="m12 17 8.500-8.500c1.600-1.200 4 1 2.800 2.800L15 20z" />
                    <path {...solid} d="m11.300 17.500 3.200 3L12 23.500H8z" />
                    <Corner />
                  </Icon>
                </PaletteButton>
                <PaletteButton aria-label="Dibujar">
                  <Icon size={32} w={2}>
                    <path d="M20 21.500c-4 1.500-11.500 1-11.800-4C8 12 14 10.300 18.500 10.500c6.500.3 6.200 5.200 1.500 6.500-2 .5-4.500.5-5.500 0" />
                    <Corner />
                  </Icon>
                </PaletteButton>
              </Palette>
            </Gutter>
            <Page>
              <Frame>
                <Block $center>
                  <p>&nbsp;&nbsp;CONTRATACIÓN DIRECTA DE CONSULTORÍA</p>
                  <p>“CÓDIGO DEL PROCEDIMIENTO: <strong>CDC-GADPR-VALLE-HERMOSO-2024-0001</strong>”</p>
                </Block>
                <Block $center>
                  <p>Sobre No. 1</p>
                  <p>OFERTA TÉCNICA</p>
                  <p>Original</p>
                </Block>
                <Block>
                  <p>Señor</p>
                  <p><strong>JAIME PATRICIO PAREDES PERRAZO</strong></p>
                  <p><strong>GOBIERNO AUTONOMO DESCENTRALIZADO PARROQUIAL RURAL VALLE HERMOSO</strong></p>
                  <p>Presente.-</p>
                </Block>
                <LastBlock>
                  <p>PRESENTADA POR: <strong>CPET S.A.S.</strong></p>
                  <p>RUC: <strong>2390629527001</strong></p>
                </LastBlock>
              </Frame>
            </Page>
            <ScrollTrack $pad={27}><ScrollThumb $h="17px" /></ScrollTrack>
          </Canvas>
        </Viewer>

        <Rail>
          <RailTools>
            <IconButton $w={46} $h={39} aria-label="Comentarios">
              <Icon><path d="M2 1.500h9.500a1 1 0 0 1 1 1v8a1 1 0 0 1-1 1H8.500L5.500 14v-2.500H2a1 1 0 0 1-1-1v-8a1 1 0 0 1 1-1zM15.500 4.500h1a.7.700 0 0 1 .7.700v8a1 1 0 0 1-1 1h-1.400v2.300l-2.600-2.300H10" /></Icon>
            </IconButton>
            <IconButton $w={46} $h={39} aria-label="Marcadores">
              <Icon>
                <path d="M1.200 1h10v15.800l-5-4-5 4z" />
                <path strokeLinecap="butt" d="M13.500 4.200H18M13.500 7.200H18M13.500 10.200H18" />
              </Icon>
            </IconButton>
            <IconButton $w={46} $h={39} aria-label="Miniaturas">
              <Icon><path d="M2 12V2.300A1.300 1.300 0 0 1 3.300 1H10M6.300 4h6L16.500 8v7.700a1.300 1.300 0 0 1-1.300 1.300h-8.900A1.300 1.300 0 0 1 5 15.700V5.300A1.300 1.300 0 0 1 6.300 4zM11.500 4.500v4.200h4.500" /></Icon>
            </IconButton>
            <IconButton $w={46} $h={39} aria-label="Firmas">
              <Icon><path d="m1 16.500 2.200-8L10 4.800l5 4.500-4.500 5.500zM1.500 16 7 10.800M10 4.500l1.800-3 4.700 4.300-1.600 3M12.500 16c1.500 0 2-2 3-2s0 2 2 2" /></Icon>
            </IconButton>
          </RailTools>
          <PageInput aria-label="Página" defaultValue="1" />
          <PageTotal>25</PageTotal>
          <IconButton $w={46} $h={34} $dim aria-label="Página anterior">
            <Icon size={12} w={2.200}><path d="m2 8 4-4 4 4" /></Icon>
          </IconButton>
          <IconButton $w={46} $h={34} aria-label="Página siguiente">
            <Icon size={12} w={2.200}><path d="m2 4 4 4 4-4" /></Icon>
          </IconButton>
          <RailDivider />
          <IconButton $w={46} $h={36} aria-label="Girar">
            <Icon w={2}><path d="M15.500 12.500A7 7 0 1 1 14.500 5" /><path {...solid} d="M17.500 1.500V8H11z" /></Icon>
          </IconButton>
          <IconButton $w={46} $h={36} aria-label="Tamaño real">
            <Icon size={30}>
              <path d="M9.500 7.500h7.300l4.700 4.500v9.500a1.300 1.300 0 0 1-1.300 1.300H9.500a1.300 1.300 0 0 1-1.300-1.300V8.800a1.300 1.300 0 0 1 1.300-1.300zM16.500 7.800v4.400h4.700" />
              <text {...solid} x="14.800" y="20" fontSize="8" fontWeight="700" textAnchor="middle">1:1</text>
              <path {...solid} d="M27 22v5h-5z" />
            </Icon>
          </IconButton>
          <IconButton $w={46} $h={36} aria-label="Acercar">
            <Icon w={2}><circle cx="7.500" cy="7.500" r="5.800" /><path d="m12 12 4.500 4.500" /><path strokeLinecap="butt" d="M7.500 4.500v6M4.500 7.500h6" /></Icon>
          </IconButton>
          <IconButton $w={46} $h={36} aria-label="Alejar">
            <Icon w={2}><circle cx="7.500" cy="7.500" r="5.800" /><path d="m12 12 4.500 4.500" /><path strokeLinecap="butt" d="M4.500 7.500h6" /></Icon>
          </IconButton>
        </Rail>
      </Workspace>

      <TaskBar>
        <Weather>
          <WeatherArt>
            <CloudArt />
            <Badge>1</Badge>
          </WeatherArt>
          <span>
            24°C
            <br />
            <Muted>Mayorm. nublado</Muted>
          </span>
        </Weather>
        <Dock>
          <DockButton aria-label="Inicio de Windows"><WindowsArt /></DockButton>
          <SearchBox>
            <Icon size={16}><circle cx="7" cy="7" r="5.500" fill="#8d8580" /><path d="m11 11 4 4" /></Icon>
            <SearchInput type="text" aria-label="Búsqueda" placeholder="Búsqueda" />
            <CityArt />
          </SearchBox>
          {dock.map((d) => (
            <DockButton key={d.name} $active={d.active} aria-label={d.name}>
              {d.art}
              {d.running && <RunMark $active={d.active} />}
            </DockButton>
          ))}
        </Dock>
        <Tray>
          <TrayButton aria-label="Iconos ocultos">
            <Icon size={12}><path d="M1.500 8 6 3.500 10.500 8" /></Icon>
          </TrayButton>
          <Language>
            <span>ESP</span>
            <span>LAA</span>
          </Language>
          <TrayButton aria-label="Red y volumen">
            <Icon size={18} w={1.200}>
              <path d="M10 2.500H1.500v11H13M4.500 16h8M8.500 13.500V16M12.500 1.500h3.800v5h-3.800zM12.500 4h3.800M14.400 6.500V16" />
            </Icon>
            &nbsp;
            <Icon size={20} w={1.200}>
              <path d="M2 7.500h2.500L8.500 4v12l-4-3.500H2zM11 8c.8 1.200.8 2.800 0 4" />
              <path stroke="#7d7570" d="M13.300 6c1.800 2.400 1.800 5.600 0 8M15.700 4.300c2.600 3.400 2.600 8 0 11.400" />
            </Icon>
          </TrayButton>
          <Clock>
            <span>
              11:56
              <br />
              10/6/2024
            </span>
            <Icon size={16} w={1.300}><path d="M1.500 12h13L13 9V6A5 5 0 0 0 3 6v3zM6 12.500c.4 2 3.600 2 4 0" /></Icon>
          </Clock>
        </Tray>
      </TaskBar>
    </Shell>
  );
}
